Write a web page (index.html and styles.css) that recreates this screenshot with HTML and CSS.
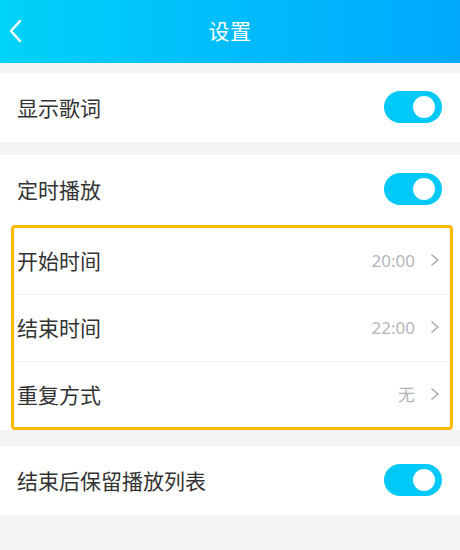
FILE: index.html
```html
<!DOCTYPE html>
<html lang="zh">
<head>
<meta charset="utf-8">
<title>设置</title>
<link rel="stylesheet" href="styles.css">
</head>
<body>
<div class="page">
  <header class="topbar">
    <svg class="back" width="14" height="24" viewBox="0 0 14 24"><path d="M12 2 L3 12 L12 22" fill="none" stroke="#fff" stroke-width="2.4" stroke-linecap="round" stroke-linejoin="round"/></svg>
    <h1 class="title">设置</h1>
  </header>

  <section class="group g1">
    <div class="row">
      <span class="label">显示歌词</span>
      <span class="toggle"><span class="knob"></span></span>
    </div>
  </section>

  <section class="group g2">
    <div class="row row-top">
      <span class="label">定时播放</span>
      <span class="toggle"><span class="knob"></span></span>
    </div>
    <div class="highlight">
      <div class="row sub">
        <span class="label">开始时间</span>
        <span class="value">20:00</span>
        <svg class="chev" width="10" height="14" viewBox="0 0 10 14"><path d="M2 2 L8 7 L2 12" fill="none" stroke="#a9abb3" stroke-width="1.6" stroke-linecap="round" stroke-linejoin="round"/></svg>
      </div>
      <div class="row sub">
        <span class="label">结束时间</span>
        <span class="value">22:00</span>
        <svg class="chev" width="10" height="14" viewBox="0 0 10 14"><path d="M2 2 L8 7 L2 12" fill="none" stroke="#a9abb3" stroke-width="1.6" stroke-linecap="round" stroke-linejoin="round"/></svg>
      </div>
      <div class="row sub last">
        <span class="label">重复方式</span>
        <span class="value">无</span>
        <svg class="chev" width="10" height="14" viewBox="0 0 10 14"><path d="M2 2 L8 7 L2 12" fill="none" stroke="#a9abb3" stroke-width="1.6" stroke-linecap="round" stroke-linejoin="round"/></svg>
      </div>
    </div>
  </section>

  <section class="group g3">
    <div class="row">
      <span class="label">结束后保留播放列表</span>
      <span class="toggle"><span class="knob"></span></span>
    </div>
  </section>
</div>
</body>
</html>
```
FILE: styles.css
```css
html, body {
  margin: 0;
  padding: 0;
}
body {
  background: #f3f4f6;
  font-family: "Noto Sans CJK SC", "Noto Sans", sans-serif;
  color: #333333;
  width: 460px;
  height: 550px;
  overflow: hidden;
}
.page {
  display: flex;
  flex-direction: column;
}
.topbar {
  height: 63px;
  box-sizing: border-box;
  padding-bottom: 3px;
  background: linear-gradient(90deg, #00d3f9 0%, #00bcfb 50%, #00a9fe 100%);
  display: flex;
  align-items: center;
  justify-content: center;
  position: relative;
}
.back {
  position: absolute;
  left: 8px;
  top: 19px;
}
.title {
  margin: 0;
  font-size: 21px;
  font-weight: 400;
  color: #ffffff;
  letter-spacing: 0.5px;
}
.group {
  background: #ffffff;
}
.g1 { margin-top: 10px; }
.g2 { margin-top: 13px; }
.g3 { margin-top: 16px; }
.row {
  height: 69px;
  box-sizing: border-box;
  display: flex;
  align-items: center;
  padding: 0 18px 2px 17px;
}
.row-top {
  height: 70px;
}
.label {
  font-size: 21px;
  flex: 1;
  color: #333333;
}
.toggle {
  width: 58px;
  height: 32px;
  border-radius: 16px;
  background: #00c9f7;
  display: flex;
  align-items: center;
  justify-content: flex-end;
  padding-right: 7px;
  box-sizing: border-box;
}
.knob {
  width: 22px;
  height: 22px;
  border-radius: 50%;
  background: #ffffff;
}
.highlight {
  margin: 0 7px 0 11px;
  border: 3px solid #ffb900;
  border-radius: 4px;
}
.row.sub {
  height: 67px;
  padding: 0 10px 2px 3px;
  border-bottom: 1px solid #f0f0f2;
}
.row.sub.last {
  height: 65px;
  border-bottom: none;
}
.value {
  font-family: "Noto Sans", "Noto Sans CJK SC", sans-serif;
  font-size: 17px;
  color: #b3b5bd;
  margin-right: 15px;
}
.chev {
  display: block;
}
```
